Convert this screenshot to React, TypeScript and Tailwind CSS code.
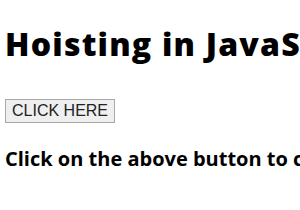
import React from 'react';

function App() {
	return (
		<div className="min-h-screen bg-white px-[5px] pt-[24px] text-black font-['Open_Sans',sans-serif] overflow-hidden">
			<h1 className="text-[32px] font-extrabold leading-[40px] tracking-[1.2px] whitespace-nowrap">Hoisting in JavaScript</h1>
			<div className="mt-[34px]">
				<button className="h-[24px] border border-[#a9a9a9] bg-[#efefef] px-[6px] text-[16px] text-[#222] font-['Liberation_Sans',sans-serif] leading-none">
					CLICK HERE
				</button>
			</div>
			<p className="mt-[22px] text-[20px] font-bold leading-[28px] whitespace-nowrap">
				Click on the above button to change the text
			</p>
		</div>
	);
}

export default App;
